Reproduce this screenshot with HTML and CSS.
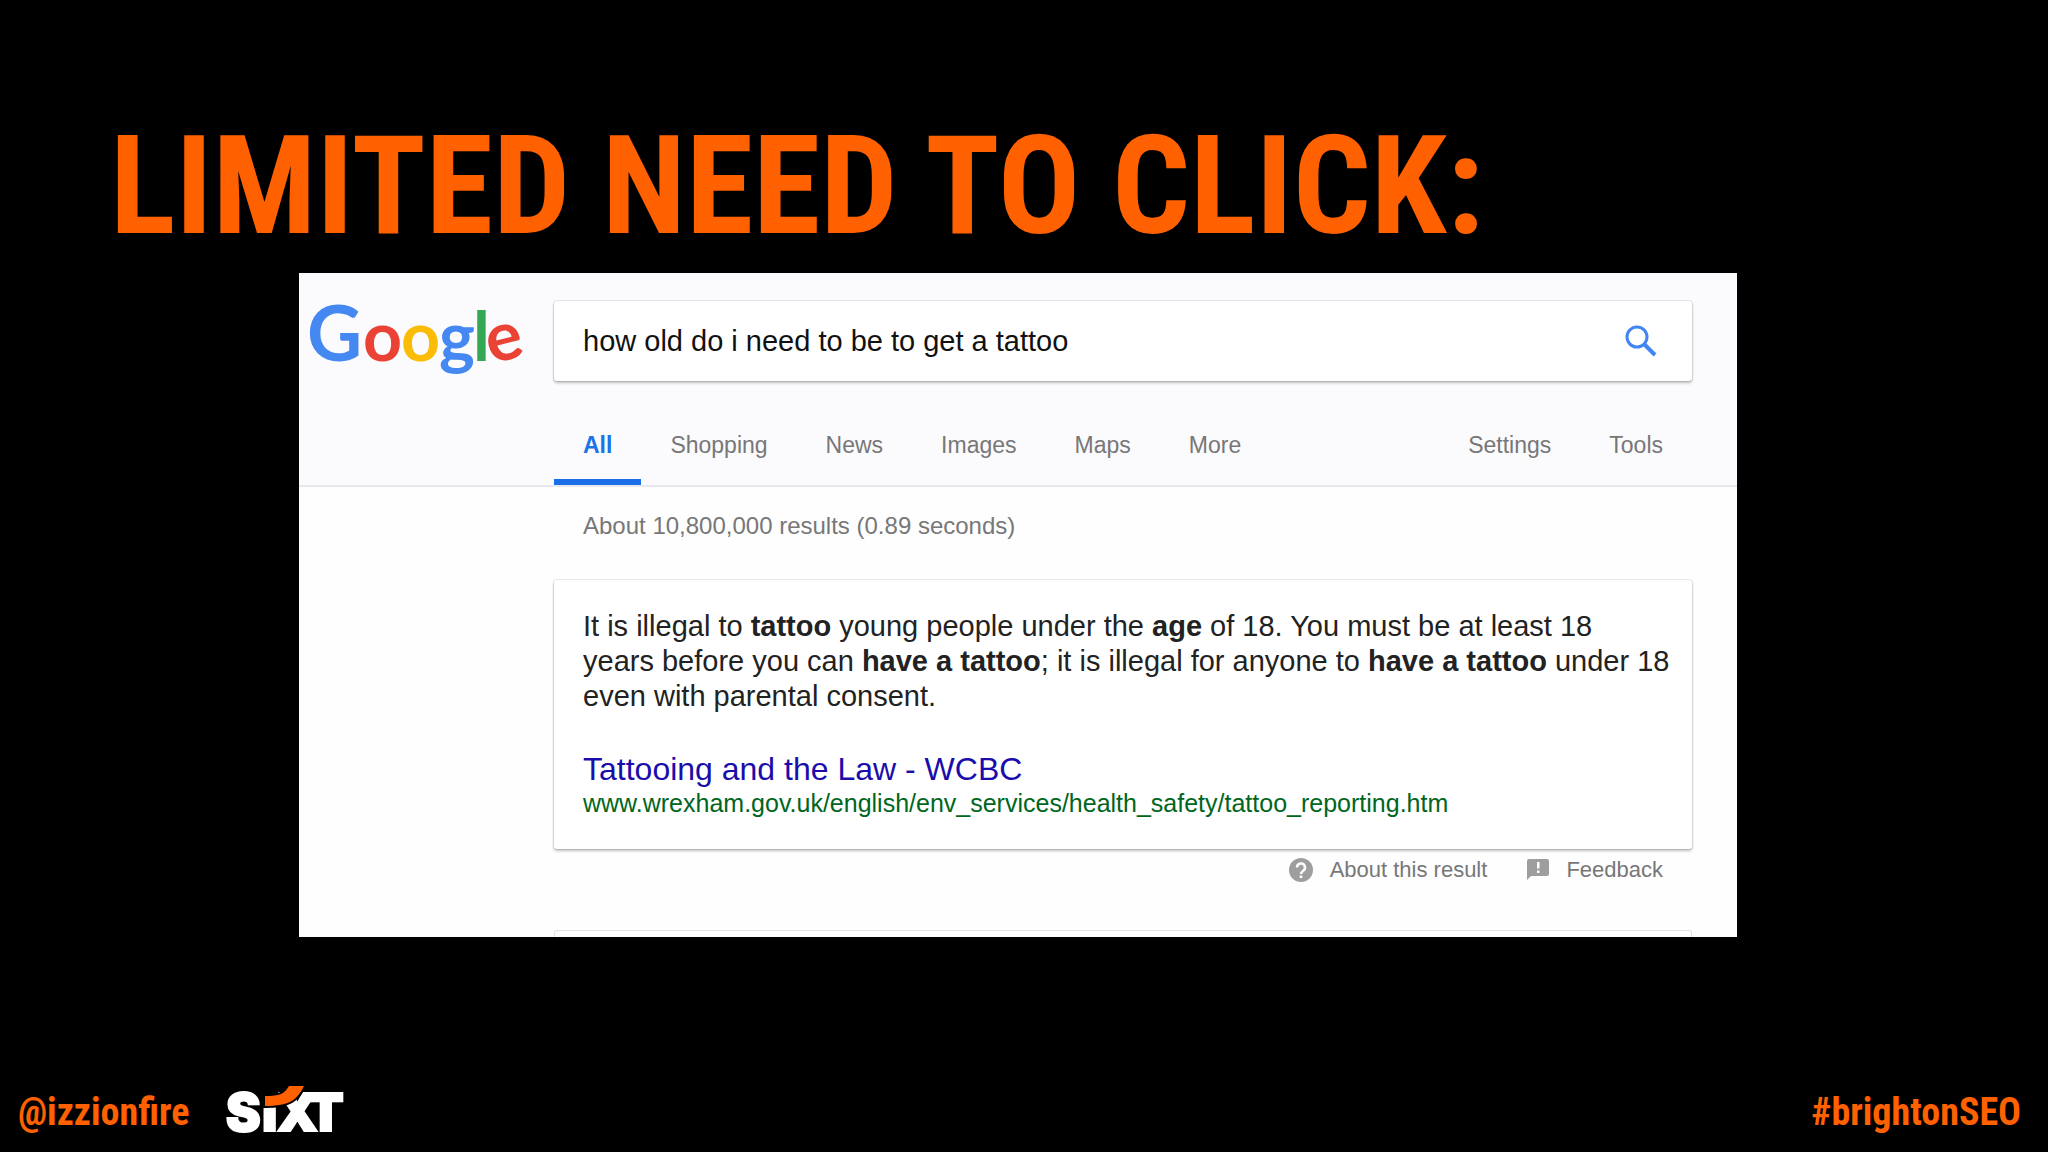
FILE: index.html
```html
<!DOCTYPE html>
<html lang="en">
  <head>
    <meta charset="UTF-8" />
    <meta name="viewport" content="width=device-width, initial-scale=1.0" />
    <title>Limited need to click</title>
    <link rel="stylesheet" href="styles.css">
  </head>
  <body>
    <main class="slide">
      <h1>LIMITED NEED TO CLICK:</h1>

      <section class="serp">
        <!-- search header -->
        <header class="serp-header">
          <a class="google-logo" href="#" aria-label="Google home">
            <svg width="220" height="80" viewBox="0 0 220 80">
              <text y="60"><tspan x="-3" class="logo-cap" fill="#4688f1">G</tspan><tspan x="53" fill="#ea4335">o</tspan><tspan x="91" fill="#fbbc05">o</tspan><tspan x="129" fill="#4688f1">g</tspan><tspan x="163" fill="#34a853">l</tspan><tspan x="181" y="63" rotate="-14" fill="#ea4335">e</tspan></text>
            </svg>
          </a>
          <form class="search-box">
            <input type="text" aria-label="Search" value="how old do i need to be to get a tattoo" />
            <button type="button" aria-label="Search">
              <svg width="32" height="32" viewBox="0 0 32 32">
                <circle cx="12" cy="12" r="10" fill="none" stroke="#4285f4" stroke-width="3" />
                <path d="M19 19L30 30" stroke="#4285f4" stroke-width="4" />
              </svg>
            </button>
          </form>
          <nav class="tabs">
            <a class="tab active" href="#">All</a>
            <a class="tab" href="#">Shopping</a>
            <a class="tab" href="#">News</a>
            <a class="tab" href="#">Images</a>
            <a class="tab" href="#">Maps</a>
            <a class="tab" href="#">More</a>
            <a class="tab tab-right" href="#">Settings</a>
            <a class="tab" href="#">Tools</a>
          </nav>
        </header>

        <!-- results -->
        <div class="results">
          <p class="stats">About 10,800,000 results (0.89 seconds)</p>

          <article class="card">
            <p class="snippet">
              It is illegal to <b>tattoo</b> young people under the <b>age</b> of 18. You must be at least 18<br>
              years before you can <b>have a tattoo</b>; it is illegal for anyone to <b>have a tattoo</b> under 18<br>
              even with parental consent.
            </p>
            <a class="result-title" href="#">Tattooing and the Law - WCBC</a>
            <cite>www.wrexham.gov.uk/english/env_services/health_safety/tattoo_reporting.htm</cite>
          </article>

          <div class="card-links">
            <a href="#">
              <svg width="24" height="24" viewBox="0 0 24 24">
                <circle cx="12" cy="12" r="12" fill="#9e9e9e" />
                <path d="M8 9.500a4 4 0 1 1 6 3.400c-1.400 1-2 1.500-2 3" fill="none" stroke="#fff" stroke-width="2.500" />
                <path d="M10.700 17.500h2.600v2.600h-2.600z" fill="#fff" />
              </svg>
              About this result
            </a>
            <a href="#">
              <svg width="22" height="24" viewBox="0 0 22 24">
                <path d="M2 1h18a2 2 0 0 1 2 2v13a2 2 0 0 1-2 2H4l-4 4V3a2 2 0 0 1 2-2z" fill="#9e9e9e" />
                <path d="M10 4h2.500v6.500H10zM10 12.500h2.500V15H10z" fill="#fff" />
              </svg>
              Feedback
            </a>
          </div>

          <div class="next-card"></div>
        </div>
      </section>

      <footer class="slide-footer">
        <span>@izzionfire</span>
        <svg class="sixt-logo" width="120" height="52" viewBox="0 0 120 52" aria-label="Sixt">
          <text y="45"><tspan x="0">S</tspan><tspan x="36">ı</tspan><tspan x="51">X</tspan><tspan x="82">T</tspan></text>
          <path d="M39 10C54 10 58 8 63 0H78C71 14 64 20 39 20z" fill="#ff6000" stroke="#000" stroke-width="4" paint-order="stroke" />
        </svg>
        <span class="hashtag">#brightonSEO</span>
      </footer>
    </main>
  </body>
</html>
```

FILE: styles.css
```css
* {
  margin: 0;
  padding: 0;
  box-sizing: border-box;
}

body {
  background: #000;
  font-family: "Liberation Sans", Arial, sans-serif;
}

a {
  color: inherit;
  text-decoration: none;
}

.slide {
  min-height: 100vh;
  display: flex;
  flex-direction: column;
}

h1,
.slide-footer {
  font-family: "Roboto Condensed", "Liberation Sans Narrow", Roboto, sans-serif;
  font-weight: 700;
  color: #ff6000;
}

h1 {
  padding: 102px 110px 3px;
  font-size: 137px;
  line-height: 168px;
}

/* search page */
.serp {
  margin: 0 311px 0 299px;
  background: #fefefe;
  color: #777;
}

.serp-header {
  display: grid;
  grid-template-columns: 255px 1fr;
  padding: 28px 45px 0 0;
  background: #fbfafd;
  border-bottom: 2px solid #e8e8ec;
}

.google-logo {
  padding: 0 0 0 11px;
}

.google-logo svg {
  display: block;
  overflow: visible;
}

.google-logo text {
  font-family: Lato, sans-serif;
  font-size: 68px;
  font-weight: 700;
}

.google-logo .logo-cap {
  font-size: 76px;
}

.search-box {
  display: flex;
  align-items: center;
  height: 80px;
  padding: 0 35px 0 29px;
  background: #fff;
  border-radius: 3px;
  box-shadow: 0 2px 3px rgba(0, 0, 0, 0.25), 0 0 0 1px rgba(0, 0, 0, 0.08);
}

.search-box input {
  flex: 1;
  min-width: 0;
  border: none;
  outline: none;
  background: none;
  font: 29px "Liberation Sans", Arial, sans-serif;
  color: #111;
}

.search-box button {
  border: none;
  background: none;
  cursor: pointer;
}

.search-box svg {
  display: block;
}

.tabs {
  grid-column: 2;
  display: flex;
  margin-top: 24px;
}

.tab {
  height: 80px;
  padding: 0 29px;
  font-size: 23px;
  line-height: 80px;
}

.tab.active {
  color: #1a73e8;
  font-weight: 700;
  border-bottom: 6px solid #1a6fe8;
}

.tab-right {
  margin-left: auto;
}

.results {
  padding: 24px 45px 0 255px;
}

.stats {
  padding-left: 29px;
  font-size: 24px;
  line-height: 30px;
}

.card {
  margin-top: 39px;
  padding: 29px 20px 31px 29px;
  background: #fff;
  border-radius: 3px;
  box-shadow: 0 2px 3px rgba(0, 0, 0, 0.25), 0 0 0 1px rgba(0, 0, 0, 0.08);
}

.snippet {
  font-size: 29px;
  line-height: 35px;
  color: #222;
}

.result-title {
  display: block;
  margin-top: 36px;
  font-size: 32px;
  line-height: 38px;
  color: #1a0dab;
}

.card cite {
  display: block;
  font-size: 25px;
  line-height: 30px;
  font-style: normal;
  color: #006621;
}

.card-links {
  display: flex;
  justify-content: flex-end;
  gap: 40px;
  padding: 8px 29px 0 0;
  font-size: 22px;
  line-height: 26px;
}

.card-links a {
  display: flex;
  align-items: center;
  gap: 17px;
}

.next-card {
  height: 7px;
  margin-top: 47px;
  border: 1px solid #e4e0e6;
  border-bottom: none;
  border-radius: 3px 3px 0 0;
}

/* speaker footer */
.slide-footer {
  display: flex;
  align-items: center;
  margin-top: auto;
  padding: 0 27px 14px 18px;
  font-size: 38px;
  line-height: 52px;
}

.sixt-logo {
  margin-left: 37px;
  overflow: visible;
}

.sixt-logo text {
  font-family: Inter, sans-serif;
  font-size: 52px;
  font-weight: 900;
  fill: #fff;
  stroke: #fff;
  stroke-width: 2px;
}

.hashtag {
  margin-left: auto;
}
```
